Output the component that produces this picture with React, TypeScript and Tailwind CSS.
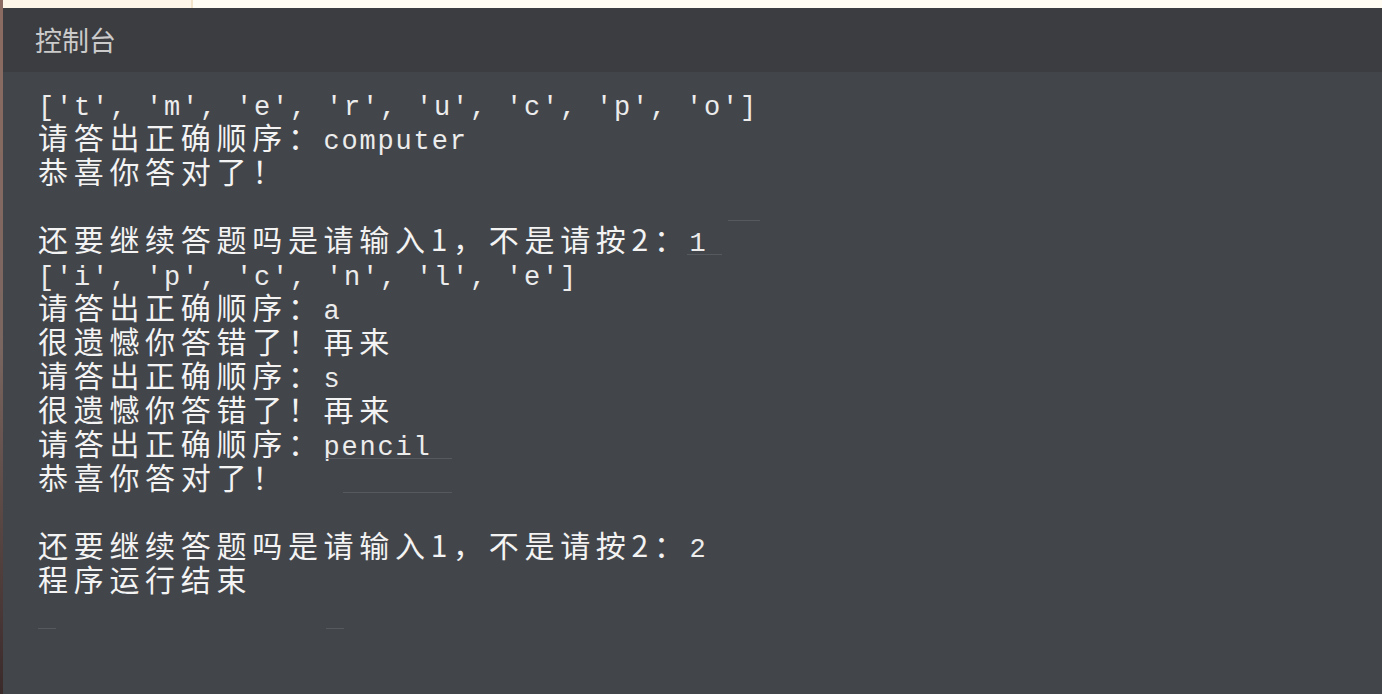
const cjk = "tracking-[5.7px]";
const mono = "font-['Liberation_Mono',monospace] text-[27px] tracking-[1.8px] text-[#ececec]";

function C({ children }: { children: string }) {
  return <span className={cjk}>{children}</span>;
}

function M({ children }: { children: string }) {
  return <span className={mono}>{children}</span>;
}

function Rule({ left, width }: { left: number; width: number }) {
  return (
    <span
      className="absolute bottom-0 h-px bg-[#56595e]"
      style={{ left, width }}
    />
  );
}

function Line({ children }: { children?: React.ReactNode }) {
  return (
    <div className="relative h-[34px] font-['Noto_Sans_CJK_SC',sans-serif] text-[30px] leading-[34px] whitespace-pre text-[#f3f3f3]">
      {children}
    </div>
  );
}

export default function App() {
  return (
    <div className="flex h-[694px] w-[1382px] overflow-hidden bg-[#42454a]">
      <div className="w-[3px] shrink-0 bg-gradient-to-b from-[#8c6c62] via-[#7a6660] to-[#3a2a2a]" />
      <div className="flex flex-1 flex-col">
        <div className="flex h-[8px] shrink-0">
          <div className="w-[190px] border-r-2 border-[#f1e4c8] bg-[#fdf6e8]" />
          <div className="flex-1 bg-[#fffdf3]" />
        </div>
        <div className="flex h-[64px] shrink-0 items-center bg-[#3c3d41] pl-[32px]">
          <span className="font-['Noto_Sans_CJK_SC',sans-serif] text-[27px] text-[#cbcbcb]">
            控制台
          </span>
        </div>
        <div className="flex-1 pl-[35px] pt-[13px]">
          <Line>
            <M>{"['t', 'm', 'e', 'r', 'u', 'c', 'p', 'o']"}</M>
          </Line>
          <Line>
            <C>请答出正确顺序：</C>
            <M>computer</M>
          </Line>
          <Line>
            <C>恭喜你答对了！</C>
          </Line>
          <Line>
            <Rule left={690} width={32} />
          </Line>
          <Line>
            <C>还要继续答题吗是请输入1，不是请按2：</C>
            <M>1</M>
            <Rule left={649} width={35} />
          </Line>
          <Line>
            <M>{"['i', 'p', 'c', 'n', 'l', 'e']"}</M>
          </Line>
          <Line>
            <C>请答出正确顺序：</C>
            <M>a</M>
          </Line>
          <Line>
            <C>很遗憾你答错了！再来</C>
          </Line>
          <Line>
            <C>请答出正确顺序：</C>
            <M>s</M>
          </Line>
          <Line>
            <C>很遗憾你答错了！再来</C>
          </Line>
          <Line>
            <C>请答出正确顺序：</C>
            <M>pencil</M>
            <Rule left={288} width={126} />
          </Line>
          <Line>
            <C>恭喜你答对了！</C>
            <Rule left={305} width={109} />
          </Line>
          <Line />
          <Line>
            <C>还要继续答题吗是请输入1，不是请按2：</C>
            <M>2</M>
          </Line>
          <Line>
            <C>程序运行结束</C>
          </Line>
          <Line>
            <Rule left={0} width={18} />
            <Rule left={288} width={18} />
          </Line>
        </div>
      </div>
    </div>
  );
}
